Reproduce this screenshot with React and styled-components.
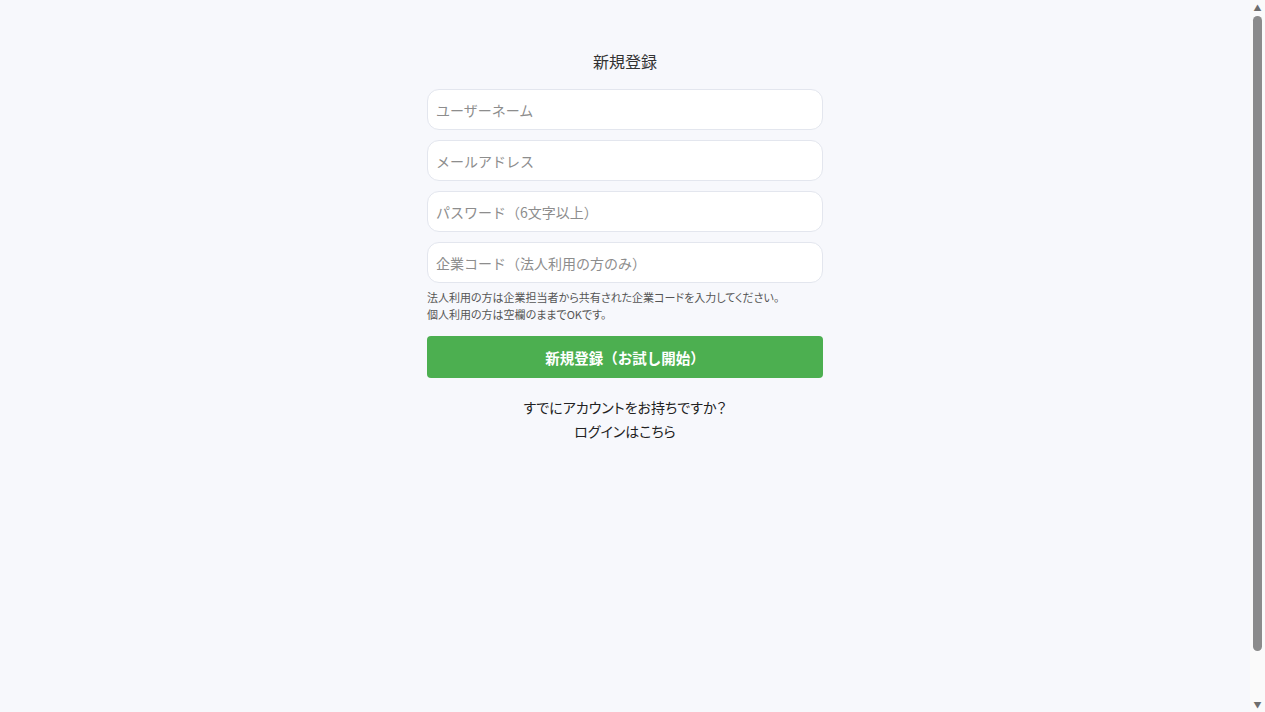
import styled, { createGlobalStyle } from 'styled-components';

const GlobalStyle = createGlobalStyle`
  html, body {
    margin: 0;
    padding: 0;
    background: #f7f8fc;
  }
  body {
    font-family: "Noto Sans CJK JP", "Noto Sans", sans-serif;
    color: #333;
  }
  * {
    box-sizing: border-box;
  }
`;

const Page = styled.div`
  min-height: 100vh;
  padding: 49px 15px 0 0;
  box-sizing: content-box;
  display: flex;
  justify-content: center;
`;

// window scrollbar as seen in the screenshot
const ScrollTrack = styled.div`
  position: fixed;
  top: 0;
  right: 0;
  bottom: 0;
  width: 15px;
  background: #fafafa;
  display: flex;
  flex-direction: column;
  align-items: center;
`;

const ScrollArrow = styled.div`
  height: 15px;
  display: flex;
  align-items: center;
  justify-content: center;
  color: #6e6e6e;
  font-size: 8px;
  line-height: 1;
`;

const ScrollThumb = styled.div`
  width: 9px;
  height: 635px;
  margin-top: 1px;
  border-radius: 5px;
  background: #8b8b8b;
`;

const ScrollSpacer = styled.div`
  flex: 1;
`;

const Form = styled.form`
  width: 396px;
  display: flex;
  flex-direction: column;
`;

const Title = styled.h2`
  margin: 0 0 16px;
  font-size: 16px;
  font-weight: 400;
  line-height: 24px;
  text-align: center;
  color: #333;
`;

const Field = styled.input`
  height: 41px;
  margin-bottom: 10px;
  padding: 0 8px;
  border: 1px solid #e3e6ee;
  border-radius: 12px;
  background: #fff;
  font-family: inherit;
  font-size: 14px;
  color: #333;
  outline: none;

  &:last-of-type {
    margin-bottom: 0;
  }

  &::placeholder {
    color: #8d8d8d;
  }
`;

const Note = styled.p`
  margin: 6px 0 0;
  font-size: 11px;
  line-height: 17px;
  font-feature-settings: 'palt';
  color: #555;
`;

const Submit = styled.button`
  height: 42px;
  margin-top: 13px;
  border: none;
  border-radius: 4px;
  background: #4caf50;
  color: #fff;
  font-family: inherit;
  font-size: 14.5px;
  font-weight: 700;
  cursor: pointer;
`;

const Footer = styled.p`
  margin: 17px 0 0;
  font-size: 14px;
  line-height: 24px;
  font-feature-settings: 'palt';
  text-align: center;
  color: #222;
`;

const LoginLink = styled.a`
  color: inherit;
  text-decoration: none;
`;

const fields = [
  { type: 'text', placeholder: 'ユーザーネーム' },
  { type: 'email', placeholder: 'メールアドレス' },
  { type: 'password', placeholder: 'パスワード（6文字以上）' },
  { type: 'text', placeholder: '企業コード（法人利用の方のみ）' },
];

export default function App() {
  return (
    <>
      <GlobalStyle />
      <Page>
        <Form onSubmit={(e) => e.preventDefault()}>
          <Title>新規登録</Title>
          {fields.map((f) => (
            <Field key={f.placeholder} type={f.type} placeholder={f.placeholder} />
          ))}
          <Note>
            法人利用の方は企業担当者から共有された企業コードを入力してください。
            <br />
            個人利用の方は空欄のままでOKです。
          </Note>
          <Submit type="submit">新規登録（お試し開始）</Submit>
          <Footer>
            すでにアカウントをお持ちですか？
            <br />
            <LoginLink href="#">ログインはこちら</LoginLink>
          </Footer>
        </Form>
      </Page>
      <ScrollTrack aria-hidden="true">
        <ScrollArrow>▲</ScrollArrow>
        <ScrollThumb />
        <ScrollSpacer />
        <ScrollArrow>▼</ScrollArrow>
      </ScrollTrack>
    </>
  );
}
